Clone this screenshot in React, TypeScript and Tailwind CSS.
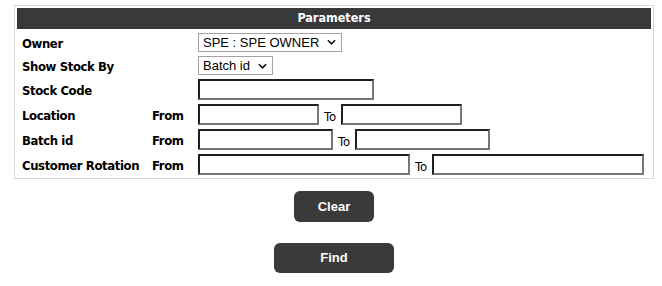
const labelFont = "[font-family:'DejaVu_Sans_Condensed','DejaVu_Sans',Tahoma,sans-serif]";

function Chevron({ className = "" }: { className?: string }) {
  return (
    <svg viewBox="0 0 10 6" className={`w-[9px] h-[6px] ${className}`} fill="none">
      <path d="M1 1l4 4 4-4" stroke="#111" strokeWidth="1.8" />
    </svg>
  );
}

function FakeSelect({ value, width }: { value: string; width: string }) {
  return (
    <div
      className={`${width} h-[19px] border border-[#a3a3a3] bg-white flex items-center justify-between pl-[4px] pr-[5px] font-['Liberation_Sans',Arial,sans-serif] text-[13px] text-black leading-none`}
    >
      <span>{value}</span>
      <Chevron />
    </div>
  );
}

function TextBox({ width }: { width: string }) {
  return (
    <input
      type="text"
      className={`${width} h-[21px] bg-white border-2 border-t-[#1f1f1f] border-l-[#1f1f1f] border-r-[#767676] border-b-[#767676] outline-none`}
    />
  );
}

function ToLabel() {
  return (
    <span className={`${labelFont} text-[13px] text-black px-[5px] pt-[3px] leading-none`}>
      To
    </span>
  );
}

function Row({
  label,
  from,
  height,
  children,
}: {
  label: string;
  from?: boolean;
  height: string;
  children: React.ReactNode;
}) {
  return (
    <div className={`flex items-center ${height}`}>
      <div
        className={`w-[135px] pl-[5px] pt-[3px] ${labelFont} font-bold text-[13px] tracking-[-0.4px] text-black`}
      >
        {label}
      </div>
      <div
        className={`w-[46px] pt-[3px] ${labelFont} font-bold text-[13px] tracking-[-0.4px] text-black`}
      >
        {from ? "From" : ""}
      </div>
      <div className="flex items-center">{children}</div>
    </div>
  );
}

export default function App() {
  return (
    <div className="w-[662px] h-[286px] bg-white pt-[5px] pl-[14px]">
      <div className="w-[640px] border border-[#d6d6d6] p-[2px] flex flex-col gap-[2px]">
        <div
          className={`h-[21px] bg-[#393939] flex items-center justify-center text-white font-bold text-[12.5px] ${labelFont}`}
        >
          Parameters
        </div>
        <Row label="Owner" height="h-[22px]">
          <FakeSelect value="SPE : SPE OWNER" width="w-[144px]" />
        </Row>
        <Row label="Show Stock By" height="h-[21px]">
          <FakeSelect value="Batch id" width="w-[75px]" />
        </Row>
        <Row label="Stock Code" height="h-[23px]">
          <TextBox width="w-[176px]" />
        </Row>
        <Row label="Location" from height="h-[23px]">
          <TextBox width="w-[121px]" />
          <ToLabel />
          <TextBox width="w-[121px]" />
        </Row>
        <Row label="Batch id" from height="h-[23px]">
          <TextBox width="w-[135px]" />
          <ToLabel />
          <TextBox width="w-[135px]" />
        </Row>
        <Row label="Customer Rotation" from height="h-[23px]">
          <TextBox width="w-[212px]" />
          <ToLabel />
          <TextBox width="w-[212px]" />
        </Row>
      </div>
      <div className="w-[640px] flex flex-col items-center mt-[12px] gap-[21px]">
        <button className="w-[80px] h-[31px] rounded-[6px] bg-[#3a3a3a] text-white font-bold text-[13px] font-['Liberation_Sans',Arial,sans-serif]">
          Clear
        </button>
        <button className="w-[120px] h-[30px] rounded-[6px] bg-[#3a3a3a] text-white font-bold text-[13px] font-['Liberation_Sans',Arial,sans-serif]">
          Find
        </button>
      </div>
    </div>
  );
}
